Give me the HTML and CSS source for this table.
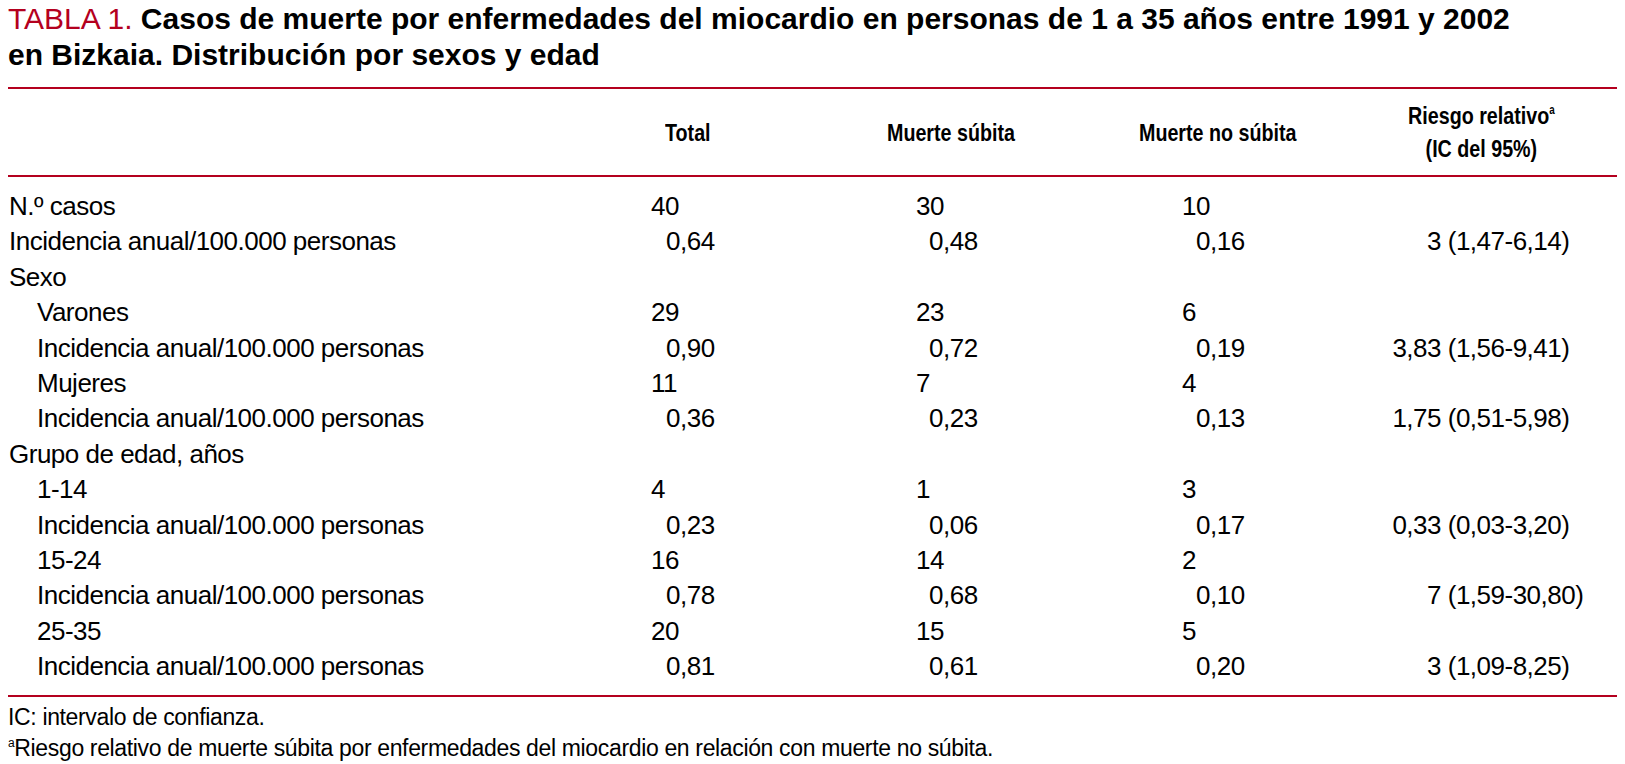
FILE: index.html
```html
<!DOCTYPE html>
<html lang="es">
<head>
<meta charset="utf-8">
<title>Tabla 1</title>
<link rel="stylesheet" href="styles.css">
</head>
<body>
<div class="page">
  <h1 class="title"><span class="lbl">TABLA 1.</span> Casos de muerte por enfermedades del miocardio en personas de 1 a 35 años entre 1991 y 2002<br>en Bizkaia. Distribución por sexos y edad</h1>
  <div class="rule rule-top"></div>
  <div class="cols head">
    <div></div>
    <div class="h-total"><span class="hx">Total</span></div>
    <div class="h-sub"><span class="hx">Muerte súbita</span></div>
    <div class="h-nosub"><span class="hx">Muerte no súbita</span></div>
    <div class="h-rr"><span class="hx hx-c">Riesgo relativo<sup>a</sup><br>(IC del 95%)</span></div>
  </div>
  <div class="rule"></div>
  <div class="cols body">
    <div class="lab">N.º casos</div><div class="c2 int">40</div><div class="c3 int">30</div><div class="c4 int">10</div><div></div>
    <div class="lab">Incidencia anual/100.000 personas</div><div class="c2 dec">0,64</div><div class="c3 dec">0,48</div><div class="c4 dec">0,16</div><div class="rr"><span class="rn">3</span> (1,47-6,14)</div>
    <div class="lab">Sexo</div><div></div><div></div><div></div><div></div>
    <div class="lab ind">Varones</div><div class="c2 int">29</div><div class="c3 int">23</div><div class="c4 int">6</div><div></div>
    <div class="lab ind">Incidencia anual/100.000 personas</div><div class="c2 dec">0,90</div><div class="c3 dec">0,72</div><div class="c4 dec">0,19</div><div class="rr"><span class="rn">3,83</span> (1,56-9,41)</div>
    <div class="lab ind">Mujeres</div><div class="c2 int">11</div><div class="c3 int">7</div><div class="c4 int">4</div><div></div>
    <div class="lab ind">Incidencia anual/100.000 personas</div><div class="c2 dec">0,36</div><div class="c3 dec">0,23</div><div class="c4 dec">0,13</div><div class="rr"><span class="rn">1,75</span> (0,51-5,98)</div>
    <div class="lab">Grupo de edad, años</div><div></div><div></div><div></div><div></div>
    <div class="lab ind">1-14</div><div class="c2 int">4</div><div class="c3 int">1</div><div class="c4 int">3</div><div></div>
    <div class="lab ind">Incidencia anual/100.000 personas</div><div class="c2 dec">0,23</div><div class="c3 dec">0,06</div><div class="c4 dec">0,17</div><div class="rr"><span class="rn">0,33</span> (0,03-3,20)</div>
    <div class="lab ind">15-24</div><div class="c2 int">16</div><div class="c3 int">14</div><div class="c4 int">2</div><div></div>
    <div class="lab ind">Incidencia anual/100.000 personas</div><div class="c2 dec">0,78</div><div class="c3 dec">0,68</div><div class="c4 dec">0,10</div><div class="rr"><span class="rn">7</span> (1,59-30,80)</div>
    <div class="lab ind">25-35</div><div class="c2 int">20</div><div class="c3 int">15</div><div class="c4 int">5</div><div></div>
    <div class="lab ind">Incidencia anual/100.000 personas</div><div class="c2 dec">0,81</div><div class="c3 dec">0,61</div><div class="c4 dec">0,20</div><div class="rr"><span class="rn">3</span> (1,09-8,25)</div>
  </div>
  <div class="rule"></div>
  <div class="notes">
    <p>IC: intervalo de confianza.</p>
    <p><sup>a</sup>Riesgo relativo de muerte súbita por enfermedades del miocardio en relación con muerte no súbita.</p>
  </div>
</div>
</body>
</html>
```
FILE: styles.css
```css
html, body {
  margin: 0;
  padding: 0;
  background: #ffffff;
  color: #000000;
}

.page {
  padding: 0 8px;
}

.title {
  margin: 0;
  padding-top: 1px;
  font-family: "Liberation Sans", Arial, sans-serif;
  font-weight: bold;
  font-size: 30px;
  line-height: 36px;
}

.title .lbl {
  font-weight: normal;
  color: #b4001e;
}

.rule {
  height: 2px;
  background: #b4001e;
}

.rule-top {
  margin-top: 14px;
}

.cols {
  display: grid;
  grid-template-columns: 632px 240px 250px 210px 277px;
}

.head {
  height: 86px;
  align-items: center;
  font-family: "Liberation Sans", Arial, sans-serif;
  font-weight: bold;
  font-size: 24px;
  line-height: 33px;
  white-space: nowrap;
}

.hx {
  display: inline-block;
  transform: scaleX(0.82);
  transform-origin: left center;
}

.hx-c {
  transform-origin: center center;
}

.head sup {
  font-size: 12px;
  line-height: 0;
  vertical-align: 10px;
}

.h-total { padding-left: 25px; }
.h-sub { padding-left: 7px; }
.h-nosub { padding-left: 9px; }
.h-rr { text-align: center; padding-left: 6px; }

.body {
  padding: 12px 0 10px;
  font-family: "Liberation Sans", Arial, sans-serif;
  font-size: 26px;
  letter-spacing: -0.5px;
  line-height: 35.4px;
  white-space: nowrap;
}

.lab { padding-left: 1px; }
.lab.ind { padding-left: 29px; }

.c2.int { padding-left: 11px; }
.c2.dec { padding-left: 26px; }
.c3.int { padding-left: 36px; }
.c3.dec { padding-left: 49px; }
.c4.int { padding-left: 52px; }
.c4.dec { padding-left: 66px; }

.rn {
  display: inline-block;
  width: 101px;
  text-align: right;
}

.notes {
  padding-top: 5px;
  font-family: "Liberation Sans", Arial, sans-serif;
  font-size: 23px;
  letter-spacing: -0.35px;
  line-height: 31px;
  white-space: nowrap;
}

.notes p {
  margin: 0;
}

.notes sup {
  font-size: 12px;
  line-height: 0;
  vertical-align: 9px;
}
```
